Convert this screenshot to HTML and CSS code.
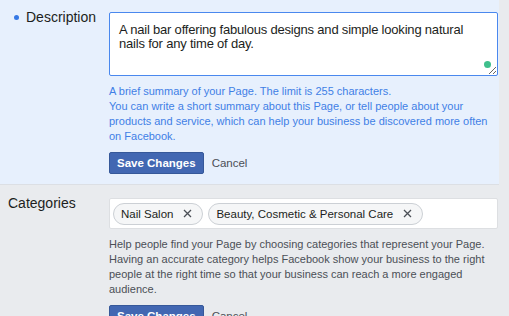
FILE: index.html
```html
<!DOCTYPE html>
<html lang="en">
<head>
    <meta charset="UTF-8">
    <meta name="viewport" content="width=device-width, initial-scale=1.0">
    <title>Page Info</title>
    <link rel="stylesheet" href="styles.css">
</head>
<body>
    <div class="row row-active">
        <div class="label"><span class="dot"></span>Description</div>
        <div class="field">
            <div class="textarea-wrap">
                <textarea class="textarea">A nail bar offering fabulous designs and simple looking natural nails for any time of day.</textarea>
                <span class="grammar-dot"></span>
            </div>
            <p class="hint hint-blue">A brief summary of your Page. The limit is 255 characters.<br>You can write a short summary about this Page, or tell people about your products and service, which can help your business be discovered more often on Facebook.</p>
            <div class="actions">
                <button class="btn-save">Save Changes</button>
                <a class="cancel" href="#">Cancel</a>
            </div>
        </div>
    </div>

    <div class="row">
        <div class="label label-plain">Categories</div>
        <div class="field">
            <div class="tags">
                <span class="tag">Nail Salon
                    <svg class="tag-x" width="9" height="9" viewBox="0 0 9 9"><path d="M1 1L8 8M8 1L1 8" stroke="#4b4f56" stroke-width="1.3" fill="none"/></svg>
                </span>
                <span class="tag">Beauty, Cosmetic &amp; Personal Care
                    <svg class="tag-x" width="9" height="9" viewBox="0 0 9 9"><path d="M1 1L8 8M8 1L1 8" stroke="#4b4f56" stroke-width="1.3" fill="none"/></svg>
                </span>
            </div>
            <p class="hint">Help people find your Page by choosing categories that represent your Page. Having an accurate category helps Facebook show your business to the right people at the right time so that your business can reach a more engaged audience.</p>
            <div class="actions">
                <button class="btn-save">Save Changes</button>
                <a class="cancel" href="#">Cancel</a>
            </div>
        </div>
    </div>
</body>
</html>
```

FILE: styles.css
```css
body {
    font-family: 'Liberation Sans', Helvetica, Arial, sans-serif;
    margin: 0;
    padding: 0;
    background: #e9ebee;
    color: #1c1e21;
    overflow: hidden;
}
.row {
    display: flex;
    width: 499px;
    padding: 13px 0 10px 0;
}
.row-active {
    background: #e7f0fd;
    padding: 12px 0 10px 0;
    border-bottom: 1px solid #dcdfe4;
}
.label {
    width: 95px;
    margin-top: -3px;
    padding-left: 14px;
    font-size: 14px;
    line-height: 16px;
    flex-shrink: 0;
}
.label-plain {
    width: 101px;
    padding-left: 8px;
}
.dot {
    display: inline-block;
    width: 5px;
    height: 5px;
    border-radius: 50%;
    background: #3578e5;
    margin-right: 7px;
    vertical-align: 2px;
}
.field {
    flex: 1;
}
.textarea-wrap {
    position: relative;
}
.textarea {
    display: block;
    box-sizing: border-box;
    width: 389px;
    height: 64px;
    margin: 0;
    padding: 10px 9px;
    border: 1px solid #4a88ee;
    border-radius: 2px;
    font-family: inherit;
    font-size: 13px;
    line-height: 14px;
    letter-spacing: -0.2px;
    color: #1c1e21;
    background: white;
    outline: none;
}
.grammar-dot {
    position: absolute;
    left: 375px;
    top: 49px;
    width: 7px;
    height: 7px;
    border-radius: 50%;
    background: #3fbf8c;
}
.hint {
    margin: 8px 0 0 0;
    font-size: 11px;
    line-height: 15px;
    color: #4b4f56;
    width: 389px;
}
.hint-blue {
    color: #3f7fe6;
}
.actions {
    display: flex;
    align-items: center;
    margin-top: 8px;
}
.btn-save {
    height: 22px;
    padding: 0 7px;
    background: #4267b2;
    border: 1px solid #365899;
    border-radius: 2px;
    color: white;
    font-family: inherit;
    font-size: 11.5px;
    font-weight: bold;
}
.cancel {
    margin-left: 8px;
    font-size: 11.5px;
    color: #4b4f56;
    text-decoration: none;
}
.tags {
    box-sizing: border-box;
    width: 389px;
    height: 31px;
    padding: 0 3px;
    display: flex;
    align-items: center;
    gap: 5px;
    background: white;
    border: 1px solid #dddfe2;
    border-radius: 2px;
}
.tag {
    box-sizing: border-box;
    display: inline-flex;
    align-items: center;
    height: 22px;
    padding: 0 10px 0 7px;
    background: #f5f6f7;
    border: 1px solid #ccd0d5;
    border-radius: 11px;
    font-size: 11.5px;
    color: #1c1e21;
}
.tag-x {
    margin-left: 10px;
}
```
